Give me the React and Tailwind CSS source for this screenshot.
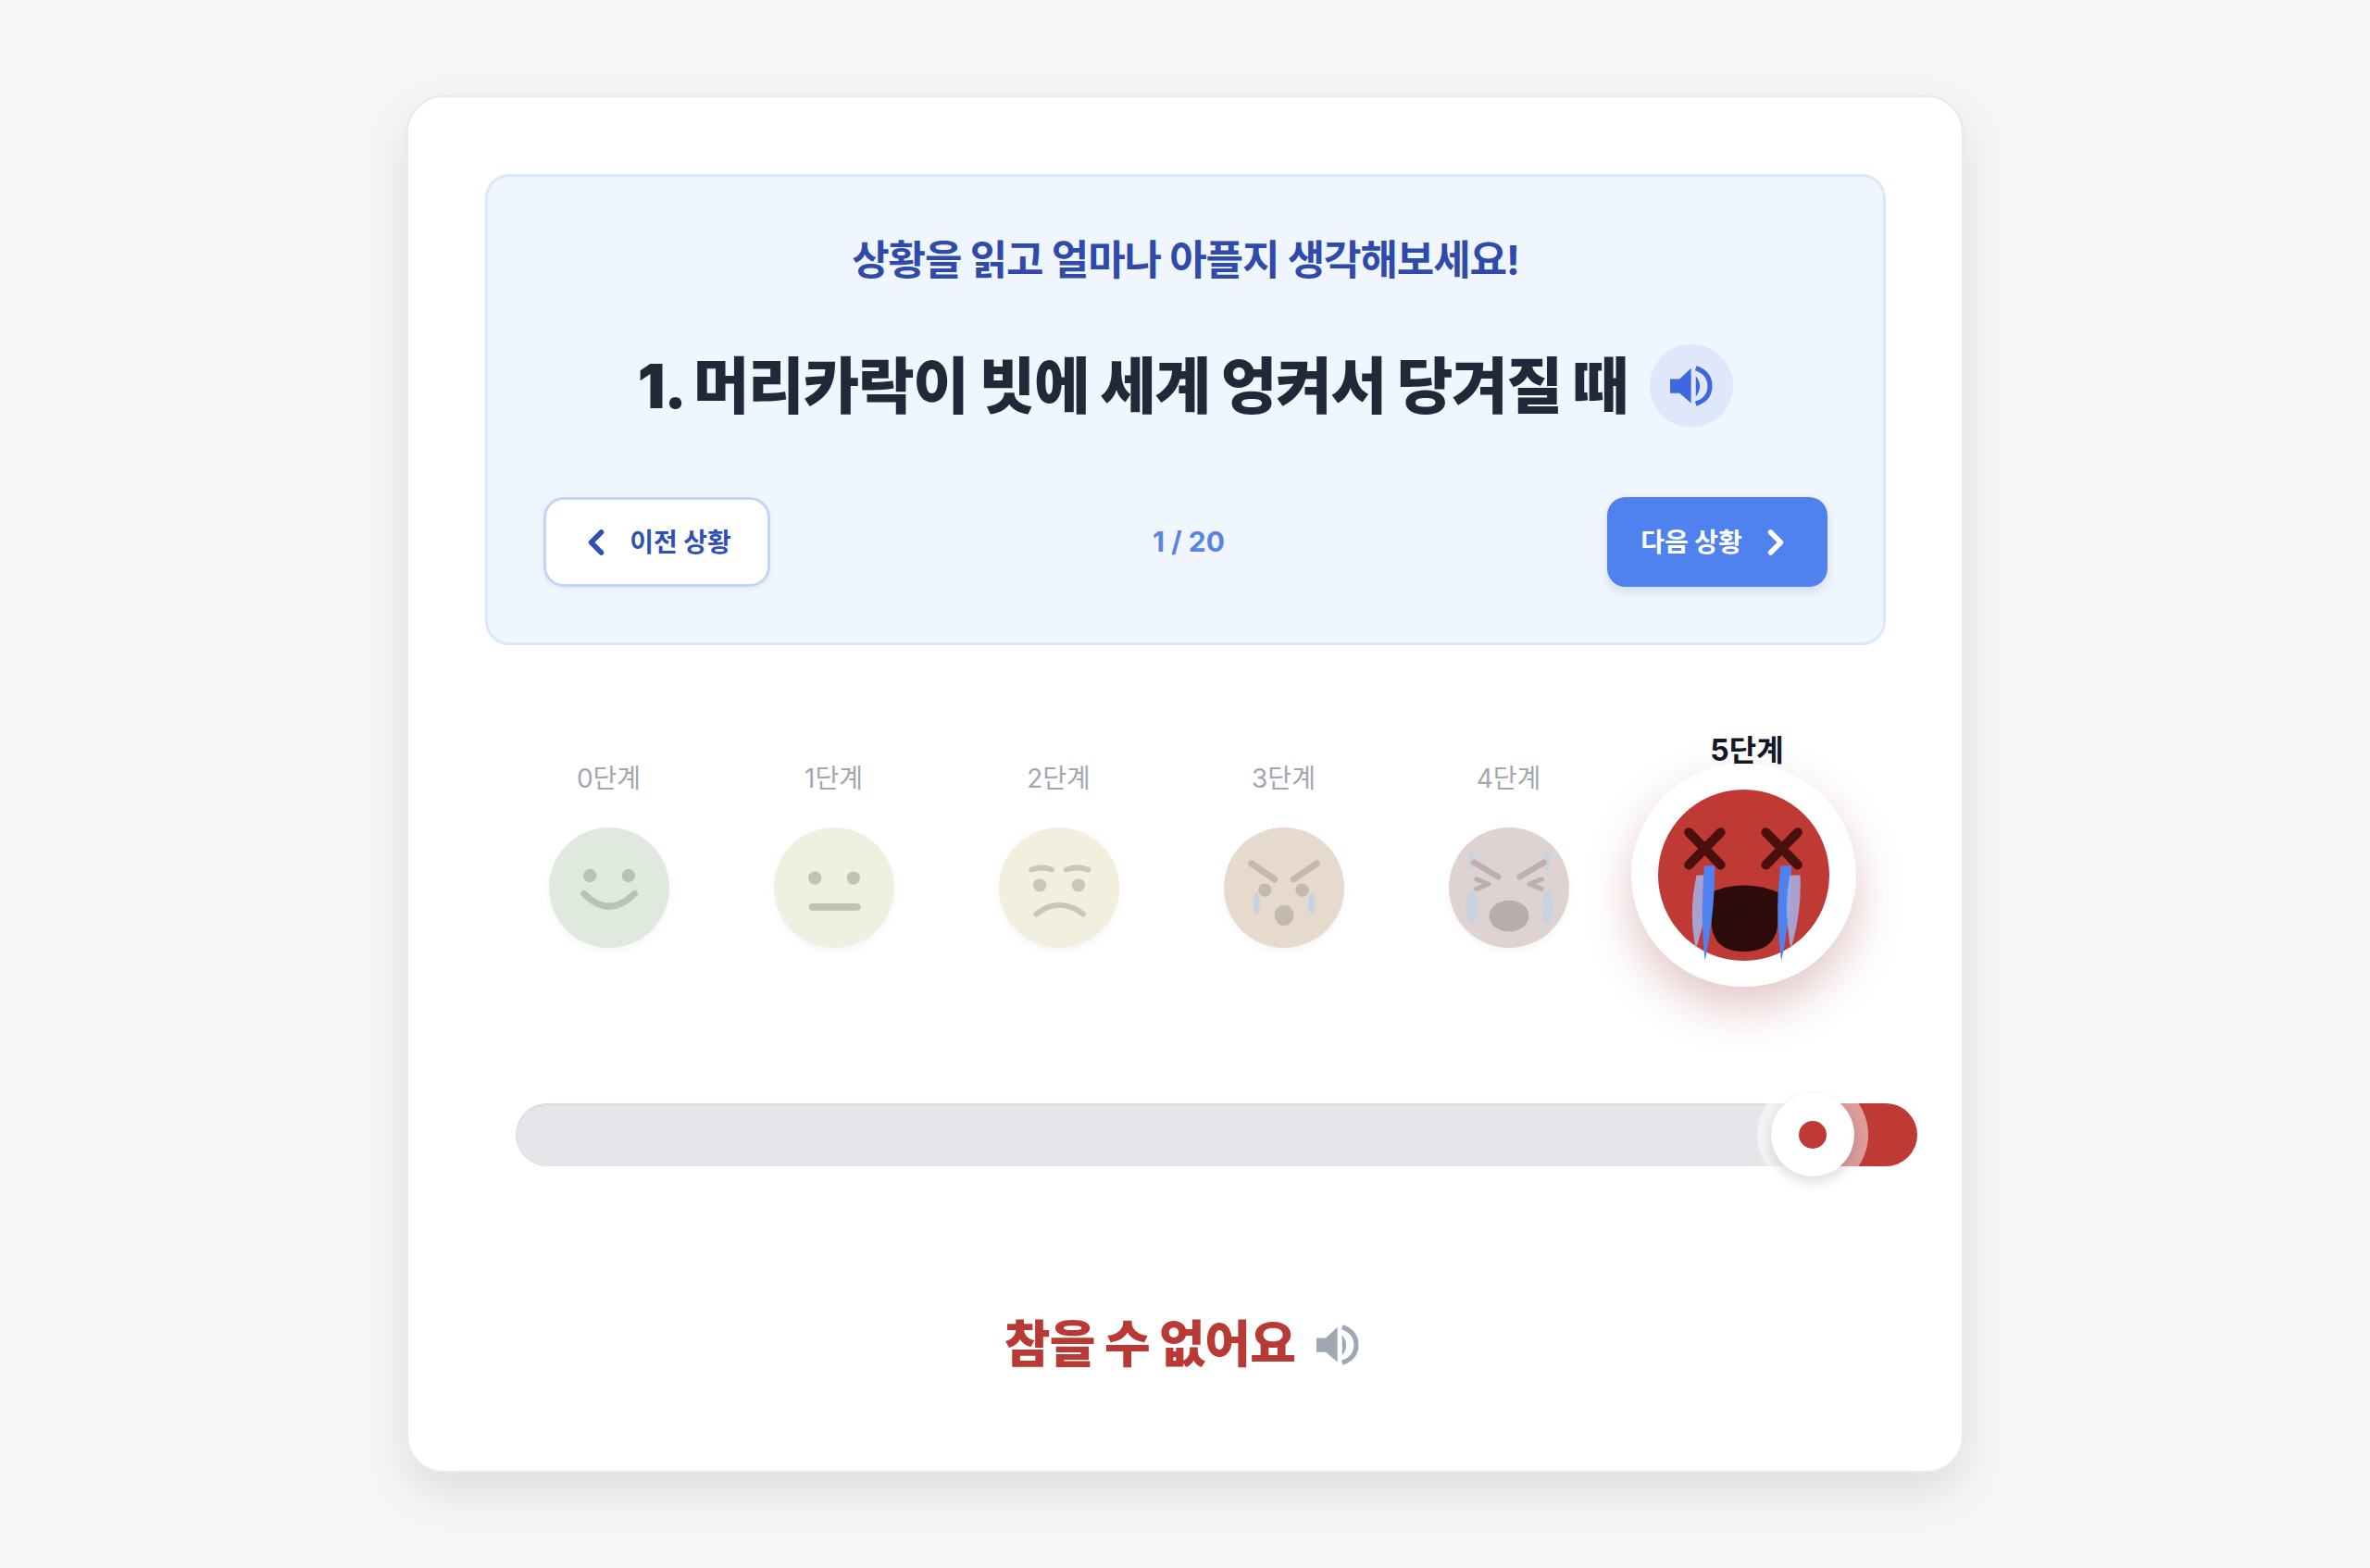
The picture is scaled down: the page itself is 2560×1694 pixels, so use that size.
import React from 'react';
import { ChevronLeft, ChevronRight } from 'lucide-react';

function Speaker({ className }) {
    return (
        <svg viewBox="0 0 136 128" className={className} fill="currentColor">
            <path d="M0 42 L30 42 L67 7 L67 119 L30 87 L0 87 Z" />
            <path d="M82 32 Q108 64 82 98 Z" />
            <path d="M82 7 Q127 22 127 64 Q127 106 82 121" fill="none" stroke="currentColor" strokeWidth="15" />
        </svg>
    );
}

function Face0() {
    return (
        <>
            <ellipse cx="34" cy="40" rx="5.5" ry="5.5" fill="#b8c3b6" />
            <ellipse cx="66" cy="40" rx="5.5" ry="5.5" fill="#b8c3b6" />
            <path d="M29 55 Q50 76 71 55" fill="none" stroke="#b8c3b6" strokeWidth="5.5" strokeLinecap="round" />
        </>
    );
}

function Face1() {
    return (
        <>
            <circle cx="34" cy="42" r="5.5" fill="#bfc4b2" />
            <circle cx="66" cy="42" r="5.5" fill="#bfc4b2" />
            <rect x="29" y="63" width="43" height="6" rx="3" fill="#bfc4b2" />
        </>
    );
}

function Face2() {
    return (
        <>
            <path d="M27 35 Q36 32 44 35" fill="none" stroke="#cbc7b5" strokeWidth="4.5" strokeLinecap="round" />
            <path d="M56 35 Q65 32 74 35" fill="none" stroke="#cbc7b5" strokeWidth="4.5" strokeLinecap="round" />
            <circle cx="34" cy="48" r="5.5" fill="#cbc7b5" />
            <circle cx="66" cy="48" r="5.5" fill="#cbc7b5" />
            <path d="M31 72 Q50 57 70 72" fill="none" stroke="#cbc7b5" strokeWidth="4.5" strokeLinecap="round" />
        </>
    );
}

function Face3() {
    return (
        <>
            <path d="M23 30 L42 43" stroke="#c4b9ae" strokeWidth="5.5" strokeLinecap="round" />
            <path d="M77 30 L58 43" stroke="#c4b9ae" strokeWidth="5.5" strokeLinecap="round" />
            <circle cx="34" cy="52" r="5.5" fill="#c4b9ae" />
            <circle cx="65" cy="52" r="5.5" fill="#c4b9ae" />
            <ellipse cx="27" cy="63" rx="3" ry="9" fill="#c8d3df" />
            <ellipse cx="73" cy="63" rx="3" ry="9" fill="#c8d3df" />
            <ellipse cx="50" cy="73" rx="8" ry="8.5" fill="#c4b9ae" />
        </>
    );
}

function Face4() {
    return (
        <>
            <ellipse cx="19" cy="27" rx="3" ry="8" fill="#c8d3df" />
            <ellipse cx="81" cy="27" rx="3" ry="8" fill="#c8d3df" />
            <path d="M21 29 L41 41" stroke="#bcb1b0" strokeWidth="5" strokeLinecap="round" />
            <path d="M79 29 L59 41" stroke="#bcb1b0" strokeWidth="5" strokeLinecap="round" />
            <path d="M23 43 L33 47 L23 51" fill="none" stroke="#bcb1b0" strokeWidth="4" strokeLinecap="round" strokeLinejoin="round" />
            <path d="M77 43 L67 47 L77 51" fill="none" stroke="#bcb1b0" strokeWidth="4" strokeLinecap="round" strokeLinejoin="round" />
            <ellipse cx="19" cy="66" rx="5" ry="14" fill="#c8d3df" />
            <ellipse cx="82" cy="66" rx="5" ry="14" fill="#c8d3df" />
            <ellipse cx="50" cy="73.5" rx="16.5" ry="13" fill="#b8adad" />
        </>
    );
}

function Face5() {
    return (
        <svg viewBox="0 0 100 100" className="w-[185px] h-[185px] overflow-visible">
            <circle cx="50" cy="50" r="50" fill="#bf3a34" />
            <path d="M18 25 L36.5 44 M36.5 25 L18 44" stroke="#4a100d" strokeWidth="5.5" strokeLinecap="round" />
            <path d="M63 25 L81.5 44 M81.5 25 L63 44" stroke="#4a100d" strokeWidth="5.5" strokeLinecap="round" />
            <path d="M31 60 Q50 52 70 60 L70 76 Q70 94.6 50 94.6 Q31 94.6 31 76 Z" fill="#2c0b0a" />
            <path d="M22.5 50 L28 50 Q29 75 22 93 Q17.5 72 22.5 50 Z" fill="#a6b3ea" fillOpacity="0.85" />
            <path d="M27 44.5 L33 44.5 Q33.5 70 27.4 100 Q24.5 75 27 44.5 Z" fill="#4f82ee" />
            <path d="M71.5 44.5 L77.8 44.5 Q78 72 72 100 Q68 72 71.5 44.5 Z" fill="#4f82ee" />
            <path d="M77 50 L83 50 Q84 72 77.5 93 Q73 70 77 50 Z" fill="#a6b3ea" fillOpacity="0.85" />
        </svg>
    );
}

function Level({ label, children, bg }) {
    return (
        <div className="w-[243px] flex flex-col items-center pt-[28px]">
            <span className="text-[28px] leading-[32px] text-[#a3a7b0]">{label}</span>
            <div className={`mt-[37px] w-[130px] h-[130px] rounded-full shadow-[0_4px_10px_rgba(0,0,0,0.04)] ${bg}`}>
                <svg viewBox="0 0 100 100" className="w-full h-full">{children}</svg>
            </div>
        </div>
    );
}

export default function App() {
    return (
        <div className="h-[1694px] bg-[#f4f6f8] flex justify-center pt-[103px] font-['Inter','Noto_Sans_CJK_KR',sans-serif]">
            <div className="w-[1682px] h-[1488px] bg-white rounded-[40px] border-2 border-[#e8eaee] shadow-[0_20px_50px_rgba(0,0,0,0.1)] p-[83px]">
                <div className="w-[1513px] h-[509px] rounded-[26px] bg-[#eff6ff] border-[3px] border-[#dbe7fb] flex flex-col items-center px-[60px] pt-[60px]">
                    <h2 className="text-[44px] leading-[60px] font-bold text-[#2f4aa8] tracking-[-0.025em]">상황을 읽고 얼마나 아플지 생각해보세요!</h2>
                    <div className="mt-[61px] flex items-center gap-[24px]">
                        <h1 className="text-[66px] leading-[90px] font-black text-[#1f2937] tracking-[-0.02em]">1. 머리카락이 빗에 세계 엉켜서 당겨질 때</h1>
                        <button className="w-[90px] h-[90px] rounded-full bg-[#dfe8fa] flex items-center justify-center text-[#3f68e0]">
                            <Speaker className="w-[46px] h-[44px]" />
                        </button>
                    </div>
                    <div className="mt-[75px] w-full flex items-center justify-between">
                        <button className="w-[245px] h-[97px] rounded-[22px] bg-white border-[3px] border-[#c2d5f6] shadow-[0_2px_6px_rgba(0,0,0,0.05)] flex items-center justify-center gap-[14px] pr-[7px] text-[#2f51b5] text-[28px] font-bold">
                            <ChevronLeft size={44} strokeWidth={3} />
                            이전 상황
                        </button>
                        <span className="text-[30px] font-bold text-[#5b84e2]">1 / 20</span>
                        <button className="w-[238px] h-[97px] rounded-[20px] bg-[#4f82ee] shadow-[0_6px_12px_rgba(0,0,0,0.1)] flex items-center justify-center gap-[14px] pl-[2px] text-white text-[28px] font-bold">
                            다음 상황
                            <ChevronRight size={44} strokeWidth={3} />
                        </button>
                    </div>
                </div>

                <div className="mt-[100px] ml-[12px] h-[395px] flex items-start">
                    <Level label="0단계" bg="bg-[#dfe9dd]"><Face0 /></Level>
                    <Level label="1단계" bg="bg-[#edf1df]"><Face1 /></Level>
                    <Level label="2단계" bg="bg-[#f3efdf]"><Face2 /></Level>
                    <Level label="3단계" bg="bg-[#e6dacd]"><Face3 /></Level>
                    <Level label="4단계" bg="bg-[#dfd3d2]"><Face4 /></Level>
                    <div className="ml-[11px] w-[243px] flex flex-col items-center">
                        <span className="relative z-10 -mt-[2px] text-[32px] leading-[32px] font-bold text-[#111827] ml-[7px]">5단계</span>
                        <div className="-mt-[2px] w-[243px] h-[241px] rounded-full bg-white flex items-center justify-center shadow-[0_22px_50px_rgba(150,50,50,0.28)]">
                            <Face5 />
                        </div>
                    </div>
                </div>

                <div className="relative ml-[33px] w-[1514px] h-[68px] rounded-full bg-[#e4e6ea] shadow-[inset_0_1px_3px_rgba(0,0,0,0.08)]">
                    <div className="absolute right-0 top-0 w-[120px] h-[68px] rounded-r-full bg-[#bf3a34]"></div>
                    <div className="absolute left-[1341px] -top-[26px] w-[120px] h-[120px] rounded-full bg-white/50"></div>
                    <div className="absolute left-[1356px] -top-[11px] w-[90px] h-[90px] rounded-full bg-white shadow-[0_6px_14px_rgba(0,0,0,0.14)] flex items-center justify-center">
                        <div className="w-[30px] h-[30px] rounded-full bg-[#bf3a34]"></div>
                    </div>
                </div>

                <div className="mt-[160px] flex items-center justify-center gap-[23px] pr-[7px]">
                    <span className="text-[54px] leading-[66px] font-black text-[#b93a34] tracking-[-0.012em]">참을 수 없어요</span>
                    <Speaker className="w-[46px] h-[44px] text-[#a0a7b4]" />
                </div>
            </div>
        </div>
    );
}
